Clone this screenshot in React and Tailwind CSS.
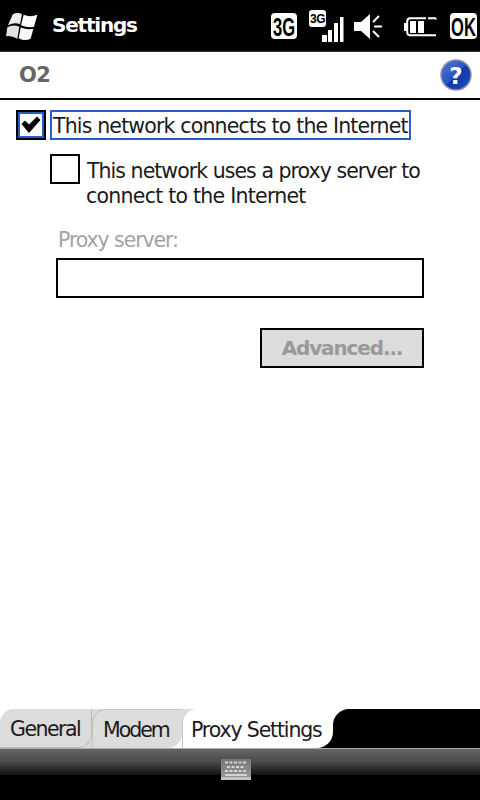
function WinLogo() {
  return (
    <svg width="32" height="29" viewBox="18 36 96 86">
      <path d="M38 43 Q52 35 66 42 L60 72 Q44 66 24 75 Z" fill="#eeeeee" />
      <path d="M71 44 Q90 52 112 44 L102 80 Q84 84 63 75 Z" fill="#ffffff" />
      <path d="M22 81 Q40 72 58 80 L52 116 Q36 106 18 108 Z" fill="#e2e2e2" />
      <path d="M62 82 Q82 90 100 86 L92 116 Q74 124 56 114 Z" fill="#f8f8f8" />
    </svg>
  );
}

function Badge({ label, w }) {
  return (
    <svg width={w} height="26" viewBox={`0 0 ${w} 26`} className="overflow-visible">
      <rect width={w} height="26" rx="4" fill="#fff" />
      <text transform={`translate(${w / 2} 22.5) scale(0.92 1.42)`} textAnchor="middle" fontSize="18" fontWeight="700" fontFamily="Liberation Sans" fill="#000">{label}</text>
    </svg>
  );
}

function Signal() {
  return (
    <svg width="36" height="33" viewBox="0 0 36 33">
      <rect x="0" y="0" width="17" height="17" rx="3" fill="#fff" />
      <text x="8.5" y="13" textAnchor="middle" fontSize="12" fontWeight="700" fontFamily="Liberation Sans" fill="#000" letterSpacing="-0.5">3G</text>
      <rect x="13" y="25" width="5" height="7" fill="#fff" />
      <rect x="19" y="20" width="4" height="12" fill="#fff" />
      <rect x="25" y="13" width="4" height="19" fill="#fff" />
      <rect x="31" y="7" width="3.5" height="25" fill="#fff" />
    </svg>
  );
}

function Speaker() {
  return (
    <svg width="28" height="27" viewBox="0 0 28 27">
      <path d="M0 9 H7 L16 1 V26 L7 18 H0 Z" fill="#fff" />
      <path d="M19 9 L25 3 M20 13.5 H28 M19 18 L25 24" stroke="#fff" strokeWidth="2" fill="none" />
    </svg>
  );
}

function Battery() {
  return (
    <svg width="33" height="20" viewBox="0 0 33 20">
      <path d="M22 1.2 H6.2 Q3.2 1.2 3.2 4.2 V15.2 Q3.2 18.2 6.2 18.2 H32 M32 1.2 H24" stroke="#fff" strokeWidth="2" fill="none" />
      <path d="M32 1.2 V3" stroke="#fff" strokeWidth="1" />
      <rect x="0" y="6" width="3" height="8" fill="#fff" />
      <rect x="6" y="4" width="6" height="12" fill="#fff" />
      <rect x="14" y="4" width="6" height="12" fill="#fff" />
    </svg>
  );
}

function Help() {
  return (
    <svg width="32" height="32" viewBox="0 0 32 32">
      <defs>
        <linearGradient id="h" x1="0" y1="0" x2="1" y2="1">
          <stop offset="0" stopColor="#4f76d8" />
          <stop offset="0.48" stopColor="#2a56c4" />
          <stop offset="0.52" stopColor="#1239a8" />
          <stop offset="0.8" stopColor="#1a46b8" />
          <stop offset="1" stopColor="#3a68d0" />
        </linearGradient>
      </defs>
      <circle cx="16" cy="16" r="15" fill="url(#h)" stroke="#8f93a6" strokeWidth="1.5" />
      <text x="16" y="24.5" textAnchor="middle" fontSize="23" fontWeight="700" fontFamily="DejaVu Sans" fill="#fff">?</text>
    </svg>
  );
}

function Keyboard() {
  return (
    <svg width="30" height="21" viewBox="0 0 30 21">
      <defs>
        <linearGradient id="k" x1="0" y1="0" x2="0" y2="1">
          <stop offset="0" stopColor="#777" />
          <stop offset="1" stopColor="#999" />
        </linearGradient>
      </defs>
      <rect width="30" height="21" fill="url(#k)" />
      <rect y="18" width="30" height="3" fill="#c4c4c4" />
      <path d="M4 3.5 H26 M6 8 H24 M4 12 H26" stroke="#d4d4d4" strokeWidth="2" strokeDasharray="3 1.5" />
      <rect x="4" y="15" width="22" height="2" fill="#d4d4d4" />
    </svg>
  );
}

export default function App() {
  return (
    <div className="w-[480px] h-[800px] bg-white flex flex-col overflow-hidden font-['DejaVu_Sans',sans-serif] text-[#1a1a1a]">
      <div className="h-[52px] bg-black border-b border-[#333] flex items-start shrink-0">
        <div className="ml-[6px] mt-[12px] flex"><WinLogo /></div>
        <span className="ml-[14px] mt-[13px] text-white font-bold text-[20px] leading-[24px] tracking-[-1.2px]">Settings</span>
        <div className="ml-auto flex items-start pr-[3px]">
          <div className="mt-[13px] flex"><Badge label="3G" w={26} /></div>
          <div className="ml-[12px] mt-[10px] flex"><Signal /></div>
          <div className="ml-[9px] mt-[13px] flex"><Speaker /></div>
          <div className="ml-[22px] mt-[17px] flex"><Battery /></div>
          <div className="ml-[13px] mt-[13px] flex"><Badge label="OK" w={27} /></div>
        </div>
      </div>
      <div className="h-[48px] border-b-2 border-black flex items-center justify-between shrink-0 pl-[19px] pr-[8px]">
        <span className="font-bold text-[#666] text-[21px] tracking-[-0.6px] leading-none mt-[1px]">O2</span>
        <Help />
      </div>
      <div className="flex-1">
        <div className="flex items-center mt-[10px] ml-[16px]">
          <div className="w-[30px] h-[30px] border-2 border-black flex items-center justify-center shrink-0">
            <div className="w-[26px] h-[26px] border-2 border-[#2a5cc4] flex items-center justify-center">
              <svg width="20" height="18" viewBox="0 0 20 18"><path d="M0.5 8 L4 4.5 L8 8.5 L16 0.5 L19.5 4 L8 17 Z" fill="#000" /></svg>
            </div>
          </div>
          <div className="ml-[4px] w-[361px] h-[30px] border-2 border-[#2a5cc4] flex items-center pl-[1px] pt-[2px] text-[20.5px] tracking-[-0.84px] whitespace-nowrap">This network connects to the Internet</div>
        </div>
        <div className="flex mt-[14px] ml-[50px]">
          <div className="w-[30px] h-[30px] border-2 border-black shrink-0" />
          <div className="ml-[6px] text-[20.5px] leading-[25px] mt-[5px]">
            <div className="ml-[1px] tracking-[-0.96px]">This network uses a proxy server to</div>
            <div className="tracking-[-0.75px]">connect to the Internet</div>
          </div>
        </div>
        <div className="ml-[58px] mt-[19px] text-[20.5px] leading-[24px] tracking-[-1.1px] text-[#a3a3a3]">Proxy server:</div>
        <div className="ml-[56px] mt-[6px] w-[368px] h-[40px] border-2 border-black" />
        <div className="ml-[260px] mt-[30px] w-[164px] h-[40px] border-2 border-black bg-[#dcdcdc] flex items-center justify-center font-bold text-[#999] text-[20px] tracking-[-1.13px]">Advanced...</div>
      </div>
      <div className="h-[39px] bg-white flex items-stretch shrink-0 text-[20.5px]">
        <div className="w-[92px] bg-[#dcdcdc] rounded-tl-[14px] flex">
          <div className="flex-1 rounded-br-[14px] border-r border-b border-[#b8b8b8] pl-[10px] pt-[3px] flex items-center tracking-[-1.5px]">General</div>
        </div>
        <div className="w-[90px] bg-[#dcdcdc] rounded-br-[14px] flex">
          <div className="flex-1 rounded-tl-[14px] border-l border-t border-[#c4c4c4] pl-[10px] pt-[2px] flex items-center tracking-[-2px]">Modem</div>
        </div>
        <div className="w-[151px] bg-[linear-gradient(to_bottom,#dcdcdc_50%,#000_50%)] flex">
          <div className="flex-1 bg-white rounded-tl-[14px] rounded-br-[16px] border-l border-[#c4c4c4] pl-[8px] pt-[3px] flex items-center tracking-[-1.15px] whitespace-nowrap">Proxy Settings</div>
        </div>
        <div className="flex-1 bg-white flex">
          <div className="flex-1 bg-black rounded-tl-[16px]" />
        </div>
      </div>
      <div className="h-[52px] shrink-0 bg-black relative">
        <div className="h-[27px] bg-gradient-to-b from-[#666] via-[#4a4a4a] to-[#111] border-t border-[#aaa]" />
        <div className="absolute left-[221px] top-[11px] flex"><Keyboard /></div>
      </div>
    </div>
  );
}
